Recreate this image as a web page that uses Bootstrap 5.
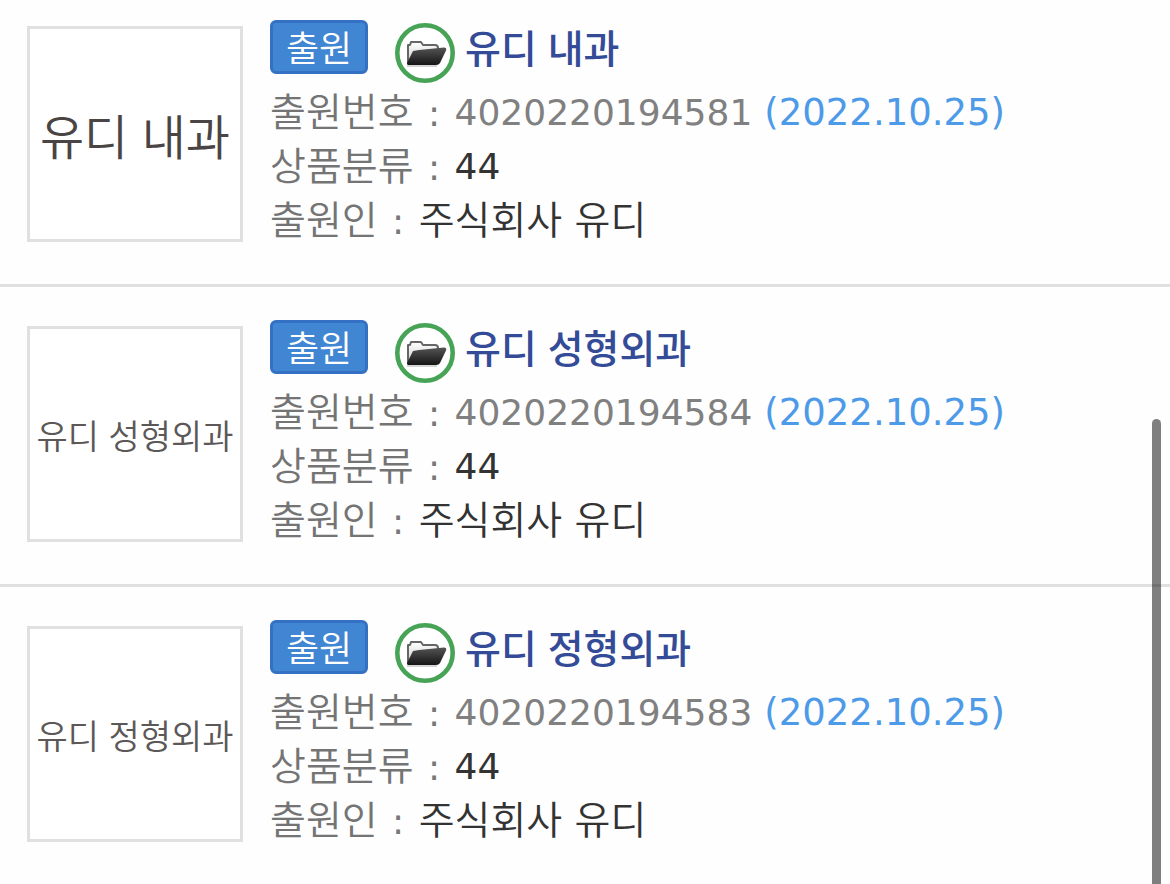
<!DOCTYPE html>
<html lang="ko">
<head>
<meta charset="utf-8">
<meta name="viewport" content="width=device-width, initial-scale=1">
<title>상표 출원 목록</title>
<link href="https://cdn.jsdelivr.net/npm/bootstrap@5.3.0/dist/css/bootstrap.min.css" rel="stylesheet">
<style>
  body { font-family: "Noto Sans CJK KR", sans-serif; background: #fefefe; color: #333; }
  .tm-item { padding: 39px 27px 42px; gap: 27px; border-bottom: 3px solid #e0e0e0; }
  .tm-item:first-child { padding-top: 26px; }
  .tm-item:last-child { border-bottom: 0; }
  .tm-thumb { width: 216px; height: 216px; border: 3px solid #e0e0e0; background: #fff; color: #4a4444; white-space: nowrap; }
  .thumb-lg { font-size: 48px; font-weight: 350; }
  .thumb-sm { font-size: 34px; font-weight: 350; color: #5c5858; }
  .tm-info { margin: -6px 0; }
  .tm-head { height: 65px; }
  .tm-status { width: 98px; height: 54px; margin-right: 27px; border: 3px solid #3470c4; border-radius: 6px; background: #4086d2; color: #fff; font-size: 36px; font-weight: 350; line-height: 46px; }
  .tm-icon { width: 60px; height: 60px; margin: 3px 10px 0 0; }
  .tm-title { color: #344b98; font-size: 39px; font-weight: 500; line-height: 52px; text-decoration: none; }
  .tm-line { height: 54px; }
  .tm-line dt, .tm-owner { font-size: 39px; font-weight: 350; line-height: 48px; }
  .tm-line .tm-owner { font-family: "DejaVu Sans", "Noto Sans CJK KR", sans-serif; line-height: 56px; }
  .tm-line dt { color: #747474; }
  .tm-line dt::after { content: ":"; display: inline-block; width: 41px; text-align: center; font-family: "DejaVu Sans", sans-serif; font-size: 36px; font-weight: 400; line-height: 1; color: #777; }
  .tm-num { font-family: "DejaVu Sans", sans-serif; font-size: 36px; line-height: 56px; }
  .tm-no { color: #808080; }
  .tm-date { color: #4d9ae8; font-size: 37px; margin-left: 12px; }
  .scroll-thumb { width: 9px; top: 419px; bottom: 0; right: 9px; border-radius: 5px 5px 0 0; background: rgba(0,0,0,.5); }
</style>
</head>
<body>
<svg width="0" height="0" class="position-absolute" aria-hidden="true">
  <defs>
    <linearGradient id="folderFill" x1="0" y1="0" x2="0" y2="1"><stop offset="0" stop-color="#555"/><stop offset="1" stop-color="#151515"/></linearGradient>
    <linearGradient id="folderBack" x1="0" y1="0" x2="0" y2="1"><stop offset="0" stop-color="#fff"/><stop offset="1" stop-color="#ccc"/></linearGradient>
    <symbol id="folder" viewBox="0 0 60 60">
      <circle cx="30" cy="30" r="27.7" fill="#fff" stroke="#47a457" stroke-width="4.6"/>
      <path d="M13 41V22h2l1-3h10l2 3h12q3 0 3 3v3" fill="url(#folderBack)" stroke="#666" stroke-width="2" stroke-linejoin="round"/>
      <path d="M18 28l6-1 25-2.500q3 0 2 3l-6 12.500q-1 2-4 2H13q-1 0-1-2z" fill="url(#folderFill)"/>
      <path d="M12 43h30" stroke="#aaa" stroke-width="1"/>
    </symbol>
  </defs>
</svg>
<main>
  <article class="tm-item d-flex align-items-start">
    <div class="tm-thumb thumb-lg flex-shrink-0 d-flex align-items-center justify-content-center">유디 내과</div>
    <div class="tm-info flex-grow-1">
      <div class="tm-head d-flex align-items-start">
        <span class="tm-status text-center">출원</span>
        <svg class="tm-icon" aria-hidden="true"><use href="#folder"/></svg>
        <a class="tm-title" href="#">유디 내과</a>
      </div>
      <dl class="m-0">
        <div class="tm-line d-flex"><dt>출원번호</dt><dd class="tm-num m-0"><span class="tm-no">4020220194581</span><span class="tm-date">(2022.10.25)</span></dd></div>
        <div class="tm-line d-flex"><dt>상품분류</dt><dd class="tm-num m-0">44</dd></div>
        <div class="tm-line d-flex"><dt>출원인</dt><dd class="tm-owner m-0">주식회사 유디</dd></div>
      </dl>
    </div>
  </article>
  <article class="tm-item d-flex align-items-start">
    <div class="tm-thumb thumb-sm flex-shrink-0 d-flex align-items-center justify-content-center">유디 성형외과</div>
    <div class="tm-info flex-grow-1">
      <div class="tm-head d-flex align-items-start">
        <span class="tm-status text-center">출원</span>
        <svg class="tm-icon" aria-hidden="true"><use href="#folder"/></svg>
        <a class="tm-title" href="#">유디 성형외과</a>
      </div>
      <dl class="m-0">
        <div class="tm-line d-flex"><dt>출원번호</dt><dd class="tm-num m-0"><span class="tm-no">4020220194584</span><span class="tm-date">(2022.10.25)</span></dd></div>
        <div class="tm-line d-flex"><dt>상품분류</dt><dd class="tm-num m-0">44</dd></div>
        <div class="tm-line d-flex"><dt>출원인</dt><dd class="tm-owner m-0">주식회사 유디</dd></div>
      </dl>
    </div>
  </article>
  <article class="tm-item d-flex align-items-start">
    <div class="tm-thumb thumb-sm flex-shrink-0 d-flex align-items-center justify-content-center">유디 정형외과</div>
    <div class="tm-info flex-grow-1">
      <div class="tm-head d-flex align-items-start">
        <span class="tm-status text-center">출원</span>
        <svg class="tm-icon" aria-hidden="true"><use href="#folder"/></svg>
        <a class="tm-title" href="#">유디 정형외과</a>
      </div>
      <dl class="m-0">
        <div class="tm-line d-flex"><dt>출원번호</dt><dd class="tm-num m-0"><span class="tm-no">4020220194583</span><span class="tm-date">(2022.10.25)</span></dd></div>
        <div class="tm-line d-flex"><dt>상품분류</dt><dd class="tm-num m-0">44</dd></div>
        <div class="tm-line d-flex"><dt>출원인</dt><dd class="tm-owner m-0">주식회사 유디</dd></div>
      </dl>
    </div>
  </article>
</main>
<div class="scroll-thumb position-fixed"></div>
<script src="https://cdn.jsdelivr.net/npm/bootstrap@5.3.0/dist/js/bootstrap.bundle.min.js"></script>
</body>
</html>
